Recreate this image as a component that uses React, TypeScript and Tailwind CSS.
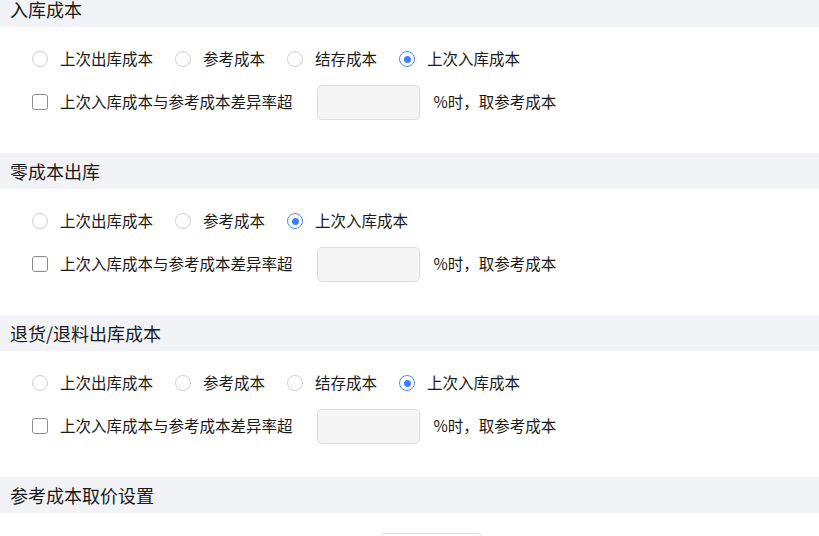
import React from "react";

type SectionProps = {
  title: string;
  options: string[];
  selected: number;
  first?: boolean;
};

const Radio: React.FC<{ label: string; checked: boolean }> = ({ label, checked }) => (
  <label className="flex items-center gap-[12px]">
    <span
      className={
        checked
          ? "w-4 h-4 rounded-full border-[1.5px] border-[#4a8ef8] flex items-center justify-center"
          : "w-4 h-4 rounded-full border border-[#d0d0d0] bg-white"
      }
    >
      {checked && <span className="w-[7px] h-[7px] rounded-full bg-[#3b82f6]" />}
    </span>
    <span>{label}</span>
  </label>
);

const SectionTitle: React.FC<{ title: string }> = ({ title }) => (
  <div className="h-9 bg-[#f2f3f7] px-[10px] flex items-center text-[18px] leading-[18px] text-[#1a1a1a]">
    {title}
  </div>
);

const CostSection: React.FC<SectionProps> = ({ title, options, selected, first }) => (
  <div className={first ? "-mt-[9px]" : ""}>
    <SectionTitle title={title} />
    <div className="pl-[32px] pt-[17px] pb-[33px] text-[15.5px] text-[#1a1a1a]">
      <div className="h-[30px] flex items-center gap-[22px]">
        {options.map((o, i) => (
          <Radio key={o} label={o} checked={i === selected} />
        ))}
      </div>
      <div className="mt-[10px] h-9 flex items-center">
        <span className="w-4 h-4 rounded-[3px] border border-[#8c8c8c] bg-white mr-[12px]" />
        <span>上次入库成本与参考成本差异率超</span>
        <input
          type="text"
          className="ml-[24px] w-[103px] h-[35px] rounded-[5px] border border-[#dcdcdc] bg-[#f5f5f5] outline-none"
        />
        <span className="ml-[14px]">%时，取参考成本</span>
      </div>
    </div>
  </div>
);

export default function App() {
  return (
    <div
      className="w-[819px] h-[536px] overflow-hidden bg-white"
      style={{ fontFamily: '"Noto Sans CJK SC", "Noto Sans", sans-serif' }}
    >
      <CostSection
        first
        title="入库成本"
        options={["上次出库成本", "参考成本", "结存成本", "上次入库成本"]}
        selected={3}
      />
      <CostSection
        title="零成本出库"
        options={["上次出库成本", "参考成本", "上次入库成本"]}
        selected={2}
      />
      <CostSection
        title="退货/退料出库成本"
        options={["上次出库成本", "参考成本", "结存成本", "上次入库成本"]}
        selected={3}
      />
      <div>
        <SectionTitle title="参考成本取价设置" />
        <div className="pt-[20px] pl-[380px]">
          <div className="w-[102px] h-[35px] rounded-[5px] border border-[#dcdcdc] bg-white" />
        </div>
      </div>
    </div>
  );
}
